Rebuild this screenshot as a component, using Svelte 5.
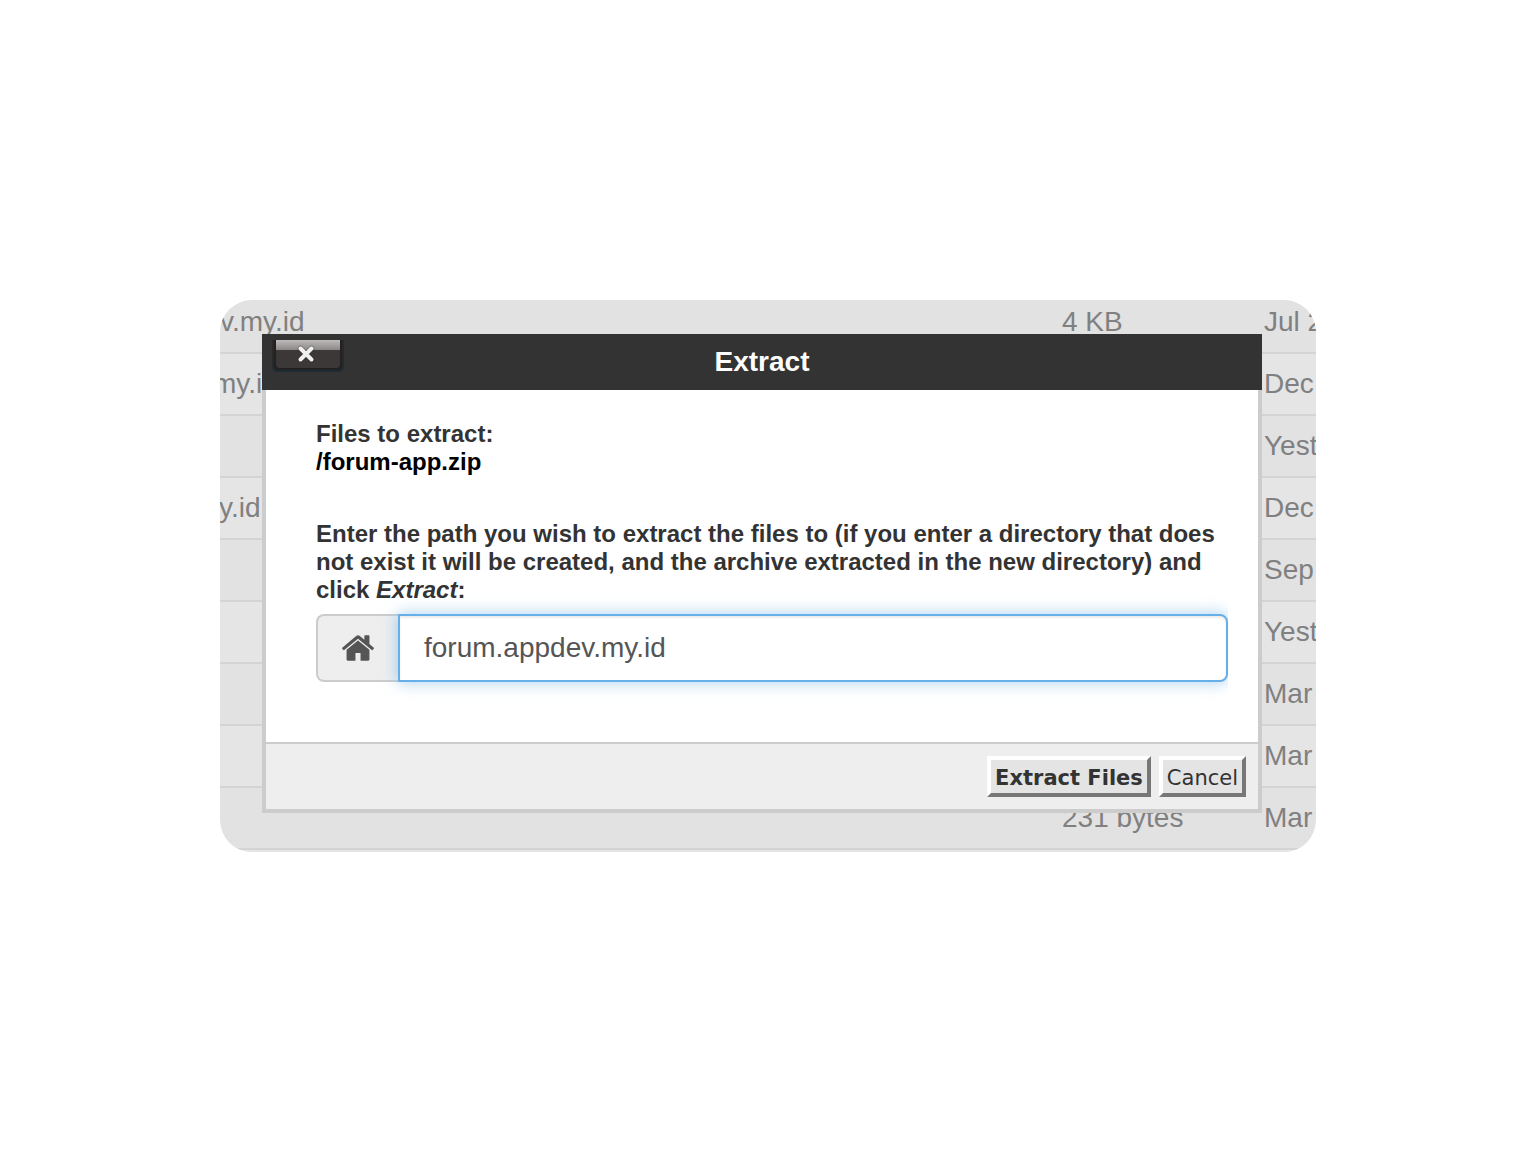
<script>
  const rows = [
    { name: 'v.my.id', cut: 2, size: '4 KB', date: 'Jul 2' },
    { name: 'my.id', cut: 9, size: '', date: 'Dec' },
    { name: '', cut: 0, size: '', date: 'Yest' },
    { name: 'y.id', cut: 3, size: '', date: 'Dec' },
    { name: '', cut: 0, size: '', date: 'Sep' },
    { name: '', cut: 0, size: '', date: 'Yest' },
    { name: '', cut: 0, size: '', date: 'Mar' },
    { name: '', cut: 0, size: '', date: 'Mar' },
    { name: '', cut: 0, size: '231 bytes', date: 'Mar' },
    { name: '', cut: 0, size: '', date: '' }
  ];
  let path = $state('forum.appdev.my.id');
</script>

<main>
  <section class="panel">
    <div class="listing">
      <table>
        <tbody>
          {#each rows as row}
            <tr>
              <td class="name" style:text-indent="{-row.cut}px">{row.name}</td>
              <td class="size">{row.size}</td>
              <td class="date">{row.date}</td>
            </tr>
          {/each}
        </tbody>
      </table>
    </div>

    <form class="dialog" role="dialog" aria-labelledby="title" onsubmit={(e) => e.preventDefault()}>
      <header>
        <button type="button" class="close" aria-label="Close">
          <svg width="72" height="34" viewBox="0 0 72 34" aria-hidden="true">
            <defs>
              <linearGradient id="shine" x1="0" y1="0" x2="0" y2="1">
                <stop offset="0" stop-color="#bdbaba" />
                <stop offset="1" stop-color="#8b8787" />
              </linearGradient>
              <linearGradient id="rim" x1="0" y1="0" x2="0" y2="1">
                <stop offset="0.6" stop-color="#292929" />
                <stop offset="1" stop-color="#1c2b33" />
              </linearGradient>
            </defs>
            <path d="M0 0H72V26Q72 32 66 32H6Q0 32 0 26Z" fill="url(#rim)" />
            <path d="M2 0H70V25Q70 30 65 30H7Q2 30 2 25Z" fill="#222021" />
            <path d="M4 0H68V24Q68 28 64 28H8Q4 28 4 24Z" fill="#3d3838" />
            <path d="M4 0H68V10H4Z" fill="url(#shine)" />
            <path d="M28.500 8.500L39.500 19.500M39.500 8.500L28.500 19.500" stroke="#282424" stroke-width="6" stroke-linecap="round" opacity="0.25" />
            <path d="M28.500 8.500L39.500 19.500M39.500 8.500L28.500 19.500" stroke="#f0f0f0" stroke-width="4" stroke-linecap="round" />
          </svg>
        </button>
        <h1 id="title">Extract</h1>
      </header>

      <div class="body">
        <p>Files to extract:<br /><span class="file">/forum-app.zip</span></p>
        <label for="path">Enter the path you wish to extract the files to (if you enter a directory that does not exist it will be created, and the archive extracted in the new directory) and click <em>Extract</em>:</label>
        <div class="field">
          <span class="addon">
            <svg width="32" height="26" viewBox="26 253 1612 1283" aria-hidden="true">
              <path fill="#555" d="M1408 992v480q0 26-19 45t-45 19H960v-384H704v384H320q-26 0-45-19t-19-45V992q0-1 .5-3t.5-3l575-474 575 474q1 2 1 6zm223-69l-62 74q-8 9-21 11h-3q-13 0-21-7L832 424l-692 577q-12 8-24 7-13-2-21-11l-62-74q-8-10-7-23.500t11-21.500l719-599q32-26 76-26t76 26l244 204V288q0-14 9-23t23-9h192q14 0 23 9t9 23v408l219 182q10 8 11 21.500t-7 23.500z" />
            </svg>
          </span>
          <input id="path" type="text" bind:value={path} />
        </div>
      </div>

      <footer>
        <button type="submit" class="primary">Extract Files</button>
        <button type="button">Cancel</button>
      </footer>
    </form>
  </section>
</main>

<style>
  :global(body) {
    margin: 0;
    background: #fff;
  }
  main {
    box-sizing: border-box;
    min-height: 100vh;
    padding: 40px 220px;
    display: flex;
    align-items: center;
    font-family: "Liberation Sans", Arial, sans-serif;
    color: #333;
  }
  .panel {
    position: relative;
    flex: 1;
    min-width: 0;
    border-radius: 32px;
    overflow: hidden;
    background: #e2e2e2;
  }
  .listing {
    height: 552px;
    overflow: hidden;
  }
  table {
    width: 100%;
    margin-top: -8px;
    table-layout: fixed;
    border-collapse: separate;
    border-spacing: 0;
    font-size: 28px;
    line-height: 60px;
    color: #808080;
  }
  td {
    box-sizing: border-box;
    height: 62px;
    padding: 0 0 0 2px;
    border-bottom: 2px solid #d4d4d4;
    white-space: nowrap;
    overflow: hidden;
  }
  tr:nth-child(even) {
    background: #e5e5e5;
  }
  .size {
    width: 202px;
  }
  .date {
    width: 54px;
  }
  .name {
    width: auto;
  }
  .dialog {
    position: absolute;
    top: 34px;
    left: 42px;
    right: 54px;
    background: #fff;
  }
  header {
    display: grid;
    grid-template-columns: 72px 1fr 72px;
    height: 56px;
    padding: 0 10px;
    background: #333;
  }
  .close {
    margin: 0;
    padding: 6px 0 0;
    border: 0;
    background: none;
    display: flex;
    cursor: pointer;
  }
  .close svg {
    display: block;
  }
  h1 {
    margin: 0;
    color: #fff;
    font-size: 28px;
    line-height: 56px;
    text-align: center;
  }
  .body {
    padding: 30px 30px 60px 50px;
    border: 4px solid #ccc;
    border-width: 0 4px;
    font-size: 24px;
    line-height: 28px;
    font-weight: bold;
  }
  p {
    margin: 0 0 44px;
  }
  .file {
    color: #000;
  }
  label {
    display: block;
  }
  .field {
    display: flex;
    margin-top: 10px;
    height: 68px;
    clip-path: inset(-30px 0);
  }
  .addon {
    box-sizing: border-box;
    width: 82px;
    display: flex;
    align-items: center;
    justify-content: center;
    background: #eee;
    border: 2px solid #ccc;
    border-right: 0;
    border-radius: 8px 0 0 8px;
  }
  input {
    box-sizing: border-box;
    flex: 1;
    min-width: 0;
    padding: 0 24px;
    border: 2px solid #66afe9;
    border-radius: 0 8px 8px 0;
    outline: none;
    background: #fff;
    color: #555;
    font: 28px "Liberation Sans", Arial, sans-serif;
    box-shadow: inset 0 2px 2px rgba(0, 0, 0, 0.075), 0 0 16px rgba(102, 175, 233, 0.6);
  }
  footer {
    display: flex;
    justify-content: flex-end;
    gap: 8px;
    padding: 12px;
    background: #eee;
    border: 4px solid #ccc;
    border-top-width: 2px;
  }
  footer button {
    height: 41px;
    padding: 2px 4px 0;
    border: 4px solid;
    border-color: #fff #777 #777 #fff;
    background: #e4e4e4;
    color: #333;
    font: 21px "DejaVu Sans", Verdana, sans-serif;
  }
  footer .primary {
    font-weight: bold;
  }
</style>
